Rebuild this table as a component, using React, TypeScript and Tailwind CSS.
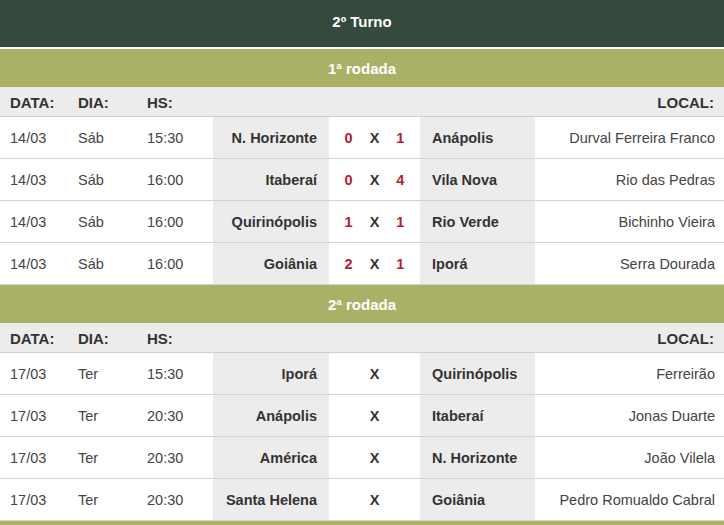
import React from "react";

type Jogo = {
  data: string;
  dia: string;
  hs: string;
  casa: string;
  golsCasa?: string;
  golsFora?: string;
  fora: string;
  local: string;
};

const rodada1: Jogo[] = [
  { data: "14/03", dia: "Sáb", hs: "15:30", casa: "N. Horizonte", golsCasa: "0", golsFora: "1", fora: "Anápolis", local: "Durval Ferreira Franco" },
  { data: "14/03", dia: "Sáb", hs: "16:00", casa: "Itaberaí", golsCasa: "0", golsFora: "4", fora: "Vila Nova", local: "Rio das Pedras" },
  { data: "14/03", dia: "Sáb", hs: "16:00", casa: "Quirinópolis", golsCasa: "1", golsFora: "1", fora: "Rio Verde", local: "Bichinho Vieira" },
  { data: "14/03", dia: "Sáb", hs: "16:00", casa: "Goiânia", golsCasa: "2", golsFora: "1", fora: "Iporá", local: "Serra Dourada" },
];

const rodada2: Jogo[] = [
  { data: "17/03", dia: "Ter", hs: "15:30", casa: "Iporá", fora: "Quirinópolis", local: "Ferreirão" },
  { data: "17/03", dia: "Ter", hs: "20:30", casa: "Anápolis", fora: "Itaberaí", local: "Jonas Duarte" },
  { data: "17/03", dia: "Ter", hs: "20:30", casa: "América", fora: "N. Horizonte", local: "João Vilela" },
  { data: "17/03", dia: "Ter", hs: "20:30", casa: "Santa Helena", fora: "Goiânia", local: "Pedro Romualdo Cabral" },
];

const cols = "grid grid-cols-[68px_69px_76px_116px_91px_115px_1fr]";

const Titulo = ({ texto }: { texto: string }) => (
  <div className="h-[38px] bg-[#abb067] flex items-center justify-center pt-[2px] text-white text-[15px] font-bold">
    {texto}
  </div>
);

const Cabecalho = () => (
  <div className={`${cols} h-[30px] bg-[#ececec] border-b border-[#cfcfcf] items-center pt-[3px] text-[15px] font-bold text-[#333]`}>
    <span className="pl-[10px]">DATA:</span>
    <span className="pl-[10px]">DIA:</span>
    <span className="pl-[10px]">HS:</span>
    <span className="col-start-7 text-right pr-[10px]">LOCAL:</span>
  </div>
);

const Linha = ({ j }: { j: Jogo }) => (
  <div className={`${cols} h-[42px] border-b border-[#d4d4d4] text-[14.5px] text-[#444]`}>
    <span className="pl-[10px] pt-[3px] flex items-center">{j.data}</span>
    <span className="pl-[10px] pt-[3px] flex items-center">{j.dia}</span>
    <span className="pl-[10px] pt-[3px] flex items-center">{j.hs}</span>
    <span className="bg-[#ececec] flex items-center justify-end pr-[12px] pt-[3px] font-bold text-[#333]">{j.casa}</span>
    <span className="flex items-center justify-center gap-[17px] pt-[3px] font-bold text-[#333]">
      {j.golsCasa && <span className="text-[#b4202e]">{j.golsCasa}</span>}
      <span>X</span>
      {j.golsFora && <span className="text-[#b4202e]">{j.golsFora}</span>}
    </span>
    <span className="bg-[#ececec] flex items-center pl-[12px] pt-[3px] font-bold text-[#333]">{j.fora}</span>
    <span className="flex items-center justify-end pr-[9px] pt-[3px]">{j.local}</span>
  </div>
);

export default function App() {
  return (
    <div className="w-[724px] h-[525px] overflow-hidden bg-white font-['Liberation_Sans',Arial,sans-serif]">
      <div className="h-[47px] bg-[#354a3d] flex items-center justify-center text-white text-[15px] font-bold pb-[2px]">
        2º Turno
      </div>
      <div className="h-[2px] bg-white" />
      <Titulo texto="1ª rodada" />
      <Cabecalho />
      {rodada1.map((j, i) => (
        <Linha key={i} j={j} />
      ))}
      <Titulo texto="2ª rodada" />
      <Cabecalho />
      {rodada2.map((j, i) => (
        <Linha key={i} j={j} />
      ))}
      <div className="h-[6px] bg-[#abb067]" />
    </div>
  );
}
